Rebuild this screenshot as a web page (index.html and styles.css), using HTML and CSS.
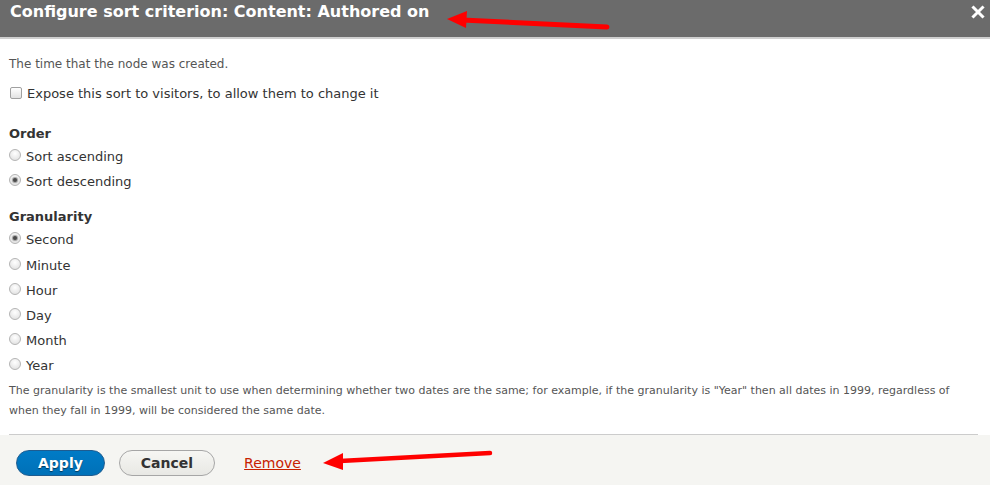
FILE: index.html
```html
<!DOCTYPE html>
<html lang="en">
<head>
<meta charset="utf-8">
<title>Configure sort criterion</title>
<link rel="stylesheet" href="styles.css">
</head>
<body>
<div class="dialog">
  <div class="titlebar">
    <span class="title">Configure sort criterion: Content: Authored on</span>
    <button class="close" type="button" aria-label="Close">
      <svg width="14" height="14" viewBox="0 0 14 14"><path d="M2.5 2.5 L11.5 11.5 M11.5 2.5 L2.5 11.5" stroke="#fff" stroke-width="3" stroke-linecap="square"/></svg>
    </button>
  </div>
  <div class="content">
    <p class="intro">The time that the node was created.</p>
    <label class="check-row"><span class="checkbox"></span>Expose this sort to visitors, to allow them to change it</label>

    <div class="group-title order">Order</div>
    <div class="radios">
      <label class="radio-row"><span class="radio"></span>Sort ascending</label>
      <label class="radio-row"><span class="radio on"></span>Sort descending</label>
    </div>

    <div class="group-title gran">Granularity</div>
    <div class="radios">
      <label class="radio-row"><span class="radio on"></span>Second</label>
      <label class="radio-row"><span class="radio"></span>Minute</label>
      <label class="radio-row"><span class="radio"></span>Hour</label>
      <label class="radio-row"><span class="radio"></span>Day</label>
      <label class="radio-row"><span class="radio"></span>Month</label>
      <label class="radio-row"><span class="radio"></span>Year</label>
    </div>
    <p class="desc">The granularity is the smallest unit to use when determining whether two dates are the same; for example, if the granularity is "Year" then all dates in 1999, regardless of when they fall in 1999, will be considered the same date.</p>
    <div class="divider"></div>
  </div>
  <div class="buttonpane">
    <button class="btn primary" type="button">Apply</button>
    <button class="btn" type="button">Cancel</button>
    <a class="remove" href="#">Remove</a>
  </div>
</div>
<svg class="annot" width="990" height="485" viewBox="0 0 990 485">
  <line x1="462" y1="20" x2="607" y2="27" stroke="#ff0000" stroke-width="5" stroke-linecap="round"/>
  <polygon points="447,19 467,11 466,28" fill="#ff0000"/>
  <line x1="340" y1="461" x2="490" y2="453" stroke="#ff0000" stroke-width="4.5" stroke-linecap="round"/>
  <polygon points="323,463 343,453 343,470" fill="#ff0000"/>
</svg>
</body>
</html>
```
FILE: styles.css
```css
html, body {
  margin: 0;
  padding: 0;
  background: #fff;
}
body {
  width: 990px;
  height: 485px;
  overflow: hidden;
  position: relative;
  font-family: "DejaVu Sans", sans-serif;
  color: #333;
}
.dialog {
  display: flex;
  flex-direction: column;
  height: 485px;
}
.titlebar {
  height: 37px;
  background: #6b6b6b;
  border-bottom: 2px solid #cfcfcf;
  display: flex;
  justify-content: space-between;
  align-items: flex-start;
  box-sizing: content-box;
  flex: none;
}
.title {
  font-weight: bold;
  font-size: 16px;
  line-height: 24px;
  color: #fff;
  padding-left: 10px;
}
.close {
  background: none;
  border: 0;
  padding: 0;
  margin: 5px 5px 0 0;
  width: 14px;
  height: 14px;
  display: flex;
}
.content {
  padding: 0 12px 0 9px;
  flex: 1;
}
.intro {
  margin: 16px 0 0;
  font-size: 12px;
  line-height: 18px;
  color: #555;
}
.check-row {
  display: flex;
  align-items: center;
  margin-top: 10px;
  height: 20px;
  font-size: 13px;
  color: #333;
}
.checkbox {
  width: 10px;
  height: 10px;
  border: 1px solid #a0a0a0;
  border-radius: 2px;
  background: linear-gradient(#ffffff, #e2e2e2);
  margin: 0 5px 0 1px;
}
.group-title {
  font-weight: bold;
  font-size: 13px;
  line-height: 18px;
  color: #333;
}
.order { margin-top: 22px; }
.gran { margin-top: 14px; }
.radios {
  margin-top: 1px;
}
.radio-row {
  display: flex;
  align-items: center;
  height: 25.2px;
  font-size: 13px;
  color: #333;
}
.radio {
  width: 10px;
  height: 10px;
  border: 1px solid #b4b4b4;
  border-radius: 50%;
  background: radial-gradient(circle at 50% 35%, #ffffff, #dcdcdc);
  margin: -3px 5px 0 0;
  display: flex;
  align-items: center;
  justify-content: center;
}
.radio.on::after {
  content: "";
  width: 4px;
  height: 4px;
  border-radius: 50%;
  background: #4a4a4a;
  box-shadow: 0 0 1px 1px rgba(70,70,70,0.5);
}
.desc {
  margin: 2px 0 0;
  font-size: 11px;
  line-height: 20px;
  color: #555;
}
.divider {
  margin-top: 13px;
  border-top: 1px solid #cccccc;
}
.buttonpane {
  background: #f5f5f2;
  height: 50px;
  flex: none;
  display: flex;
  align-items: flex-start;
  padding: 15px 0 0 16px;
  box-sizing: border-box;
}
.btn {
  font-family: "DejaVu Sans", sans-serif;
  font-weight: bold;
  font-size: 14px;
  height: 26px;
  padding: 0 21px;
  border-radius: 20em;
  border: 1px solid #a6a6a6;
  background: linear-gradient(#f6f6f3, #e8e8e4);
  color: #333;
  margin-right: 14px;
  line-height: 24px;
}
.btn.primary {
  background: linear-gradient(#007bc6, #0071b8);
  border-color: #1e5c90;
  color: #fff;
  text-shadow: 0 1px 1px rgba(0,0,0,0.5);
}
.remove {
  margin-left: 15px;
  font-size: 14px;
  line-height: 26px;
  color: #c72100;
  text-decoration: underline;
}
.annot {
  position: absolute;
  left: 0;
  top: 0;
  pointer-events: none;
}
```
